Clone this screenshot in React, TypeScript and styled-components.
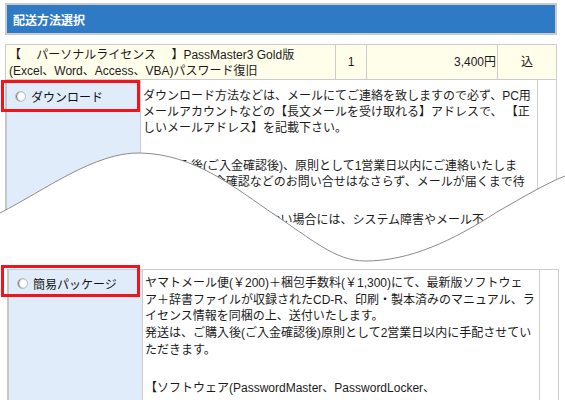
import React from "react";
import styled, { createGlobalStyle } from "styled-components";

const GlobalStyle = createGlobalStyle`
  html, body {
    margin: 0;
    padding: 0;
    overflow: hidden;
    background: #fff;
  }
  body {
    font-family: "Liberation Sans", "Noto Sans CJK JP", sans-serif;
    font-size: 12px;
    color: #1c1c1c;
  }
`;

const Page = styled.div`
  width: 565px;
  height: 400px;
  overflow: hidden;
`;

const TopPiece = styled.section`
  position: relative;
  height: 265px;
  padding-top: 3px;
  box-sizing: border-box;
  overflow: hidden;
`;

const BottomPiece = styled.section`
  position: relative;
  height: 135px;
  padding-top: 4px;
  box-sizing: border-box;
  overflow: hidden;
`;

const Header = styled.h2`
  margin: 0 0 0 5px;
  width: 552px;
  height: 32px;
  box-sizing: border-box;
  border: 2px solid #cbcbcb;
  background: #2e7ac5;
  color: #fff;
  font-size: 12px;
  font-weight: bold;
  display: flex;
  align-items: center;
  padding-left: 6px;
`;

const OrderRow = styled.div`
  margin: 9px 0 0 5px;
  width: 552px;
  height: 36px;
  box-sizing: border-box;
  display: grid;
  grid-template-columns: 330px 31px 131px 58px;
  border: 1px solid #cccccc;
  background: #fffeea;
`;

const OrderCell = styled.div<{ $align: "left" | "center" | "right" }>`
  display: flex;
  align-items: center;
  justify-content: ${(p) =>
    p.$align === "left" ? "flex-start" : p.$align === "right" ? "flex-end" : "center"};
  padding: ${(p) => (p.$align === "left" ? "2px 0 0 3px" : p.$align === "right" ? "0 1px 0 0" : "0")};
  line-height: 16px;
  white-space: nowrap;
  border-right: 1px solid #cccccc;
  &:last-child {
    border-right: none;
  }
`;

const MethodRow = styled.div<{ $x: number; $top: boolean }>`
  position: relative;
  margin-left: ${(p) => p.$x}px;
  width: 552px;
  height: 320px;
  box-sizing: border-box;
  display: grid;
  grid-template-columns: 134px 397px 18px;
  border-left: 2px solid #c6c6c6;
  border-right: 1px solid #cccccc;
  border-top: ${(p) => (p.$top ? "1px solid #cccccc" : "none")};
`;

const MethodCell = styled.div<{ $pt: number }>`
  background: #e1ecfa;
  border-right: 1px solid #cccccc;
  padding: ${(p) => p.$pt}px 0 0 8px;
`;

const Option = styled.label`
  display: flex;
  align-items: center;
  gap: 5px;
  height: 16px;
  font-size: 12px;
  color: #111;
`;

const Radio = styled.span`
  display: inline-block;
  width: 11px;
  height: 11px;
  border-radius: 50%;
  box-sizing: border-box;
  border: 1px solid #b8b8b8;
  background: radial-gradient(circle at 62% 50%, #ffffff 40%, #f0f0f0 62%, #d0d0d0 100%);
  box-shadow: inset 1.5px 0 1px -0.5px #6f6f6f;
`;

const Highlight = styled.div<{ $left: number; $top: number }>`
  position: absolute;
  left: ${(p) => p.$left}px;
  top: ${(p) => p.$top}px;
  width: 139px;
  height: 32px;
  box-sizing: border-box;
  border: 3px solid #f2141a;
  pointer-events: none;
`;

const Desc = styled.div<{ $pt: number; $lh: number; $gap: number }>`
  padding: ${(p) => p.$pt}px 0 0 2px;
  line-height: ${(p) => p.$lh}px;
  white-space: nowrap;
  overflow: hidden;
  border-right: 1px solid #cccccc;
  p {
    margin: 0;
  }
  p + p {
    margin-top: ${(p) => p.$gap}px;
  }
  span {
    display: block;
  }
`;

const Blank = styled.div`
  background: #fff;
`;

const Tear = styled.svg`
  position: absolute;
  left: 0;
  top: 0;
`;

const wave =
  "M0 213 C45 190 95 152 140 153 C195 154 235 188 275 215 C310 238 335 261 365 261 C410 261 452 241 497 212 C525 196 545 184 565 176";

const downloadText = [
  [
    "ダウンロード方法などは、メールにてご連絡を致しますので必ず、PC用",
    "メールアカウントなどの【長文メールを受け取れる】アドレスで、 【正",
    "しいメールアドレス】を記載下さい。",
  ],
  [
    "お申込み後(ご入金確認後)、原則として1営業日以内にご連絡いたしま",
    "す。なお、入金確認などのお問い合せはなさらず、メールが届くまで待",
  ],
  ["1営業日経っても連絡がない場合には、システム障害やメール不", "達の可能性がございます。"],
];

const packageText = [
  [
    "ヤマトメール便(￥200)＋梱包手数料(￥1,300)にて、最新版ソフトウェ",
    "ア＋辞書ファイルが収録されたCD-R、印刷・製本済みのマニュアル、ラ",
    "イセンス情報を同梱の上、送付いたします。",
    "発送は、ご購入後(ご入金確認後)原則として2営業日以内に手配させてい",
    "ただきます。",
  ],
  ["【ソフトウェア(PasswordMaster、PasswordLocker、"],
];

function Paragraphs({ text }: { text: string[][] }) {
  return (
    <>
      {text.map((para, i) => (
        <p key={i}>
          {para.map((line) => (
            <span key={line}>{line}</span>
          ))}
        </p>
      ))}
    </>
  );
}

function App() {
  return (
    <Page>
      <GlobalStyle />
      <TopPiece>
        <Header>配送方法選択</Header>
        <OrderRow>
          <OrderCell $align="left">
            【　 パーソナルライセンス　 】PassMaster3 Gold版
            <br />
            (Excel、Word、Access、VBA)パスワード復旧
          </OrderCell>
          <OrderCell $align="center">1</OrderCell>
          <OrderCell $align="right">3,400円</OrderCell>
          <OrderCell $align="center">込</OrderCell>
        </OrderRow>
        <MethodRow $x={5} $top={false}>
          <MethodCell $pt={8}>
            <Option>
              <Radio />
              ダウンロード
            </Option>
          </MethodCell>
          <Desc $pt={8} $lh={16} $gap={22}>
            <Paragraphs text={downloadText} />
          </Desc>
          <Blank />
          <Highlight $left={-6} $top={0} />
        </MethodRow>
        <Tear width="565" height="265" viewBox="0 0 565 265">
          <path d={`${wave} L565 265 L0 265 Z`} fill="#fff" />
          <path d={wave} fill="none" stroke="#8c8c8c" strokeWidth="1" />
        </Tear>
      </TopPiece>
      <BottomPiece>
        <MethodRow $x={7} $top>
          <MethodCell $pt={5}>
            <Option>
              <Radio />
              簡易パッケージ
            </Option>
          </MethodCell>
          <Desc $pt={5} $lh={16.7} $gap={21}>
            <Paragraphs text={packageText} />
          </Desc>
          <Blank />
          <Highlight $left={-8} $top={-5} />
        </MethodRow>
      </BottomPiece>
    </Page>
  );
}

export default App;
